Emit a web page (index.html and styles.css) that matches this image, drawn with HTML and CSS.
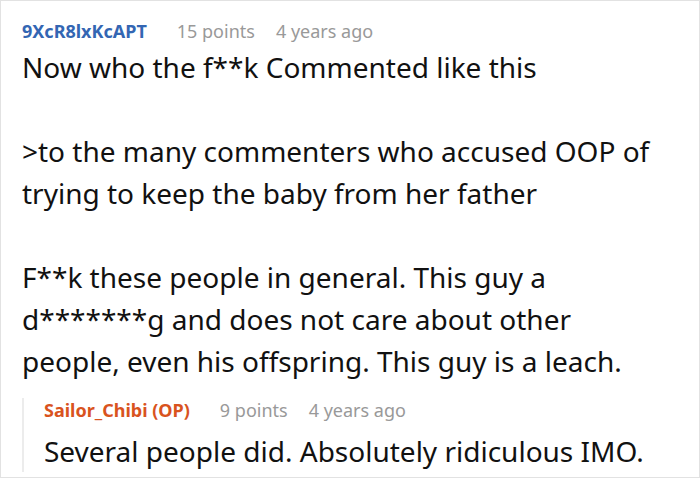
FILE: index.html
```html
<!DOCTYPE html>
<html lang="en">
<head>
  <meta charset="UTF-8" />
  <title>Comment thread</title>
  <link rel="stylesheet" href="styles.css">
</head>
<body>
  <div class="thread">
    <div class="comment">
      <div class="meta">
        <span class="author">9XcR8lxKcAPT</span>
        <span class="info">15 points</span>
        <span class="info">4 years ago</span>
      </div>
      <div class="body">
        <p>Now who the f**k Commented like this</p>
        <p>&gt;to the many commenters who accused OOP of trying to keep the baby from her father</p>
        <p>F**k these people in general. This guy a d*******g and does not care about other people, even his offspring. This guy is a leach.</p>
      </div>
    </div>

    <div class="reply">
      <div class="meta">
        <span class="author op">Sailor_Chibi (OP)</span>
        <span class="info">9 points</span>
        <span class="info">4 years ago</span>
      </div>
      <div class="body">
        <p>Several people did. Absolutely ridiculous IMO.</p>
      </div>
    </div>
  </div>
</body>
</html>
```

FILE: styles.css
```css
html, body {
  margin: 0;
  padding: 0;
  background: #fff;
}
body {
  font-family: 'Noto Sans', sans-serif;
  color: #111;
}
.thread {
  width: 700px;
  height: 478px;
  box-sizing: border-box;
  border: 1px solid #e2e2e2;
  padding: 18px 40px 0 21px;
  overflow: hidden;
}
.meta {
  display: flex;
  gap: 21px;
  font-size: 18px;
  line-height: 24px;
}
.author {
  font-weight: 700;
  color: #3366b3;
  margin-right: 9px;
}
.author.op {
  color: #d9531e;
}
.info {
  color: #999;
}
.body {
  font-size: 28px;
  line-height: 42px;
  margin-top: 3px;
}
.body p {
  margin: 42px 0 0;
}
.body p:first-child {
  margin-top: 0;
}
.reply {
  margin-top: 16px;
  border-left: 2px solid #ececec;
  padding-left: 20px;
}
.reply .body {
  margin-top: 8px;
}
```
